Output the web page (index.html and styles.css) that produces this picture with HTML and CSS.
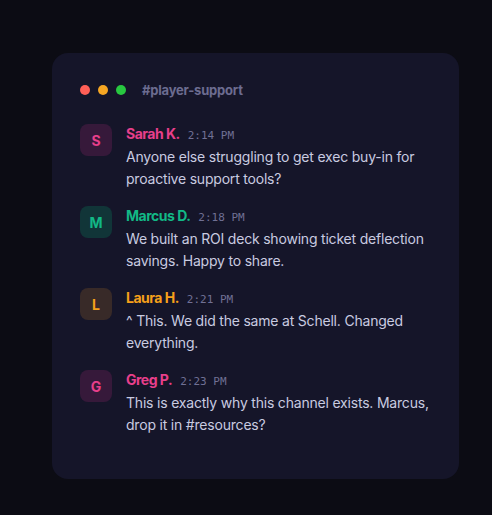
FILE: index.html
```html
<!DOCTYPE html>
<html lang="en">
<head>
<meta charset="utf-8">
<title>#player-support</title>
<link rel="stylesheet" href="styles.css">
</head>
<body>
<div class="page">
  <section class="card">
    <header class="card-head">
      <span class="dot dot-red"></span>
      <span class="dot dot-amber"></span>
      <span class="dot dot-green"></span>
      <span class="channel">#player-support</span>
    </header>
    <div class="messages">
      <article class="msg">
        <div class="avatar av-pink">S</div>
        <div class="msg-body">
          <div class="msg-meta"><span class="name name-pink">Sarah K.</span><span class="time">2:14 PM</span></div>
          <p class="text">Anyone else struggling to get exec buy-in for proactive support tools?</p>
        </div>
      </article>
      <article class="msg">
        <div class="avatar av-green">M</div>
        <div class="msg-body">
          <div class="msg-meta"><span class="name name-green">Marcus D.</span><span class="time">2:18 PM</span></div>
          <p class="text">We built an ROI deck showing ticket deflection savings. Happy to share.</p>
        </div>
      </article>
      <article class="msg">
        <div class="avatar av-amber">L</div>
        <div class="msg-body">
          <div class="msg-meta"><span class="name name-amber">Laura H.</span><span class="time">2:21 PM</span></div>
          <p class="text">^ This. We did the same at Schell. Changed everything.</p>
        </div>
      </article>
      <article class="msg">
        <div class="avatar av-pink">G</div>
        <div class="msg-body">
          <div class="msg-meta"><span class="name name-pink">Greg P.</span><span class="time">2:23 PM</span></div>
          <p class="text">This is exactly why this channel exists. Marcus, drop it in #resources?</p>
        </div>
      </article>
    </div>
  </section>
</div>
</body>
</html>
```
FILE: styles.css
```css
html, body {
  margin: 0;
  padding: 0;
  background: #0c0c14;
}
body {
  font-family: "Inter", "Noto Sans", sans-serif;
  color: #c9cbe0;
}
.page {
  padding: 53px 33px 36px 52px;
}
.card {
  background: #151529;
  border-radius: 16px;
  padding: 27px 14px 43px 28px;
  height: 426px;
  box-sizing: border-box;
}
.card-head {
  display: flex;
  align-items: center;
  gap: 8px;
  height: 20px;
}
.dot {
  width: 10px;
  height: 10px;
  border-radius: 50%;
  flex: none;
}
.dot-red { background: #ff5f57; }
.dot-amber { background: #f6a623; }
.dot-green { background: #28c840; }
.channel {
  margin-left: 8px;
  font-size: 13px;
  font-weight: 700;
  color: #6c6c90;
  letter-spacing: -0.2px;
}
.messages {
  margin-top: 24px;
  display: flex;
  flex-direction: column;
  gap: 16px;
}
.msg {
  display: flex;
  gap: 14px;
  align-items: flex-start;
}
.avatar {
  width: 32px;
  height: 32px;
  border-radius: 8px;
  flex: none;
  display: flex;
  align-items: center;
  justify-content: center;
  font-size: 14px;
  font-weight: 700;
}
.av-pink { background: #36193a; color: #e83f8b; }
.av-green { background: #113538; color: #12b886; }
.av-amber { background: #382a28; color: #f5a01a; }
.msg-body {
  flex: 1;
  min-width: 0;
}
.msg-meta {
  display: flex;
  align-items: baseline;
  gap: 8px;
  height: 20px;
  line-height: 20px;
}
.name {
  font-size: 14px;
  font-weight: 700;
  letter-spacing: -0.5px;
}
.name-pink { color: #e83f8b; }
.name-green { color: #12b886; }
.name-amber { color: #f5a01a; }
.time {
  font-family: "DejaVu Sans Mono", "Liberation Mono", monospace;
  font-size: 11px;
  color: #707094;
}
.text {
  margin: 2px 0 0;
  font-size: 14px;
  line-height: 22px;
  letter-spacing: -0.2px;
}
```
